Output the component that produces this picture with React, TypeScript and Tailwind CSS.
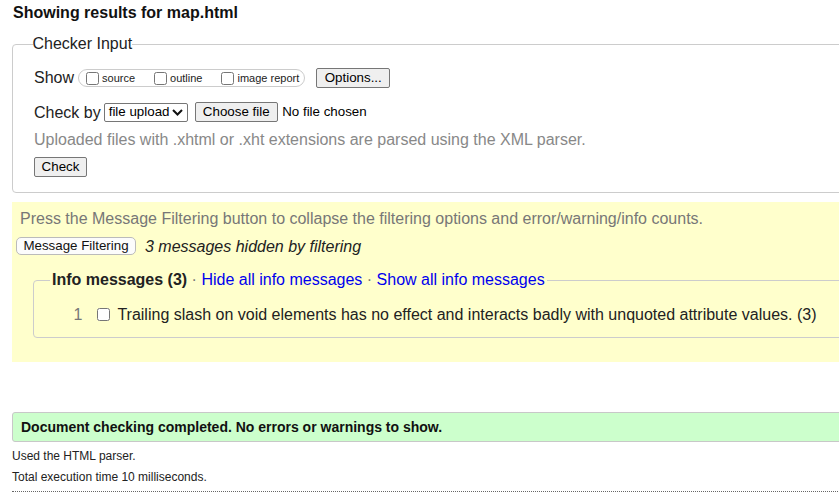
import * as React from "react"

function Tick({ className = "" }: { className?: string }) {
  return <input type="checkbox" className={`size-[13px] shrink-0 ${className}`} />
}

function NativeButton({ children, className = "" }: { children: React.ReactNode; className?: string }) {
  return (
    <button className={`flex h-[20px] shrink-0 items-center justify-center rounded-[2px] border border-[#767676] bg-[#efefef] text-[13.33px] leading-none text-black ${className}`}>
      {children}
    </button>
  )
}

export default function App() {
  return (
    <div className="h-[501px] w-[839px] overflow-hidden bg-white font-['Liberation_Sans',Arial,sans-serif] text-[#222]">
      <div className="w-[880px] pl-[12px]">
        <h2 className="pt-[4px] pl-[1px] text-[16px] font-bold leading-[18px] text-[#111]">Showing results for map.html</h2>

        {/* Checker input */}
        <fieldset className="mt-[13px] rounded-[4px] border border-[#ccc] pt-[15px] pb-[15px] pl-[21px]">
          <legend className="-ml-[1.5px] text-[16px] leading-[18px]">Checker Input</legend>

          <div className="flex h-[20px] items-center text-[16px]">
            <span>Show</span>
            <div className="ml-[4px] flex h-[18px] items-center gap-[15px] rounded-full border border-[#ccc] pl-[3px] pr-[5px] text-[11px]">
              <label className="flex items-center">
                <Tick className="ml-[4px] mr-[3px]" />
                source
              </label>
              <label className="flex items-center">
                <Tick className="ml-[4px] mr-[3px]" />
                outline
              </label>
              <label className="flex items-center">
                <Tick className="ml-[4px] mr-[3px]" />
                image report
              </label>
            </div>
            <NativeButton className="ml-[11px] w-[74px]">Options...</NativeButton>
          </div>

          <div className="mt-[14px] flex h-[20px] items-center text-[16px]">
            <span className="pt-[1px]">Check by</span>
            <div className="ml-[3px] flex h-[19px] w-[84px] items-center rounded-[2px] border border-[#767676] bg-white pl-[4px] text-[13.33px] text-black">
              file upload
              <svg className="ml-auto mr-[4px]" width="11" height="7" viewBox="0 0 11 7">
                <polyline points="1,1 5.5,5.5 10,1" fill="none" stroke="#111" strokeWidth="2" />
              </svg>
            </div>
            <NativeButton className="ml-[7px] w-[83px]">Choose file</NativeButton>
            <span className="ml-[4.5px] text-[13.33px] text-black">No file chosen</span>
          </div>

          <p className="mt-[8.5px] text-[16px] leading-[18px] text-[#888]">
            Uploaded files with .xhtml or .xht extensions are parsed using the XML parser.
          </p>

          <NativeButton className="mt-[8.5px] w-[53px]">Check</NativeButton>
        </fieldset>

        {/* Message filtering */}
        <div className="mt-[9px] bg-[#ffffcc] pt-[8px] pb-[24px]">
          <p className="pl-[8px] text-[16px] leading-[18px] text-[#777]">
            Press the Message Filtering button to collapse the filtering options and error/warning/info counts.
          </p>
          <div className="mt-[8.5px] flex items-center">
            <button className="ml-[4px] flex h-[18px] w-[120px] items-center justify-center rounded-[5px] border border-[#bbb] bg-[#fcfcfc] text-[13.33px] leading-none text-[#111]">
              Message Filtering
            </button>
            <span className="ml-[9px] pt-[1px] text-[16px] italic leading-[18px]">3 messages hidden by filtering</span>
          </div>

          <fieldset className="mt-[15.5px] ml-[21px] rounded-[4px] border border-[#ccc] pt-[16px] pb-[13.5px] pl-[16px]">
            <legend className="px-[2px] text-[16px] leading-[18px]">
              <span className="font-bold">Info messages (3)</span>
              <span className="text-[#777]"> · </span>
              <a className="text-[#0000ee]">Hide all info messages</a>
              <span className="text-[#777]"> · </span>
              <a className="text-[#0000ee]">Show all info messages</a>
            </legend>
            <div className="flex h-[18px] items-center text-[16px] leading-[18px]">
              <span className="ml-[23.5px] pt-[1px] text-[#777]">1</span>
              <Tick className="ml-[14.5px]" />
              <span className="ml-[7.5px] pt-[1px]">
                Trailing slash on void elements has no effect and interacts badly with unquoted attribute values. (3)
              </span>
            </div>
          </fieldset>
        </div>

        {/* Result */}
        <div className="mt-[50px] rounded-[3px] border border-[#c8c8c8] bg-[#ccffcc] py-[6px] pl-[8px] text-[14px] font-bold leading-[16px] text-[#111]">
          Document checking completed. No errors or warnings to show.
        </div>

        <p className="mt-[7.5px] text-[12px] leading-[14px]">Used the HTML parser.</p>
        <p className="mt-[7px] text-[12px] leading-[14px]">Total execution time 10 milliseconds.</p>
        <div className="mt-[7px] border-t border-dotted border-[#666]" />
      </div>
    </div>
  )
}
